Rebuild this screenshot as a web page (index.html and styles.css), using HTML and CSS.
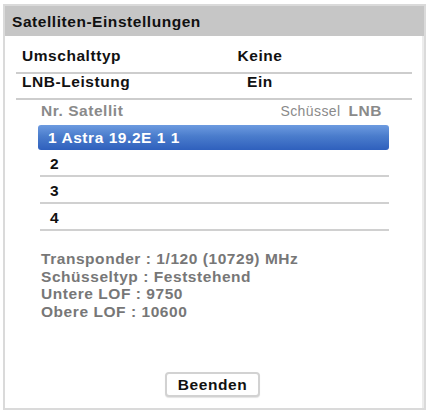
FILE: index.html
```html
<!DOCTYPE html>
<html lang="de">
<head>
<meta charset="utf-8">
<title>Satelliten-Einstellungen</title>
<link rel="stylesheet" href="styles.css">
</head>
<body>
<div class="panel">
  <div class="title">Satelliten-Einstellungen</div>
  <div class="settings">
    <div class="setting first"><span class="label">Umschalttyp</span><span class="value">Keine</span></div>
    <div class="setting second"><span class="label">LNB-Leistung</span><span class="value">Ein</span></div>
  </div>
  <div class="table">
    <div class="thead"><span class="th-name">Nr. Satellit</span><span class="th-dish">Schüssel</span><span class="th-lnb">LNB</span></div>
    <div class="trow selected">1 Astra 19.2E 1 1</div>
    <div class="trow">2</div>
    <div class="trow">3</div>
    <div class="trow">4</div>
  </div>
  <div class="info">
    <div class="line l1">Transponder : 1/120 (10729) MHz</div>
    <div class="line l2">Schüsseltyp : Feststehend</div>
    <div class="line l3">Untere LOF : 9750</div>
    <div class="line l4">Obere LOF : 10600</div>
  </div>
  <div class="actions"><button class="btn">Beenden</button></div>
</div>
</body>
</html>
```
FILE: styles.css
```css
html, body {
  margin: 0;
  padding: 0;
  background: #ffffff;
}
body {
  font-family: "Liberation Sans", Arial, sans-serif;
  font-weight: bold;
  font-size: 15.5px;
  letter-spacing: 0.55px;
  color: #111111;
}
.panel {
  box-sizing: border-box;
  width: 423px;
  height: 406px;
  margin: 4px 2px 2px 3px;
  border: 2px solid #dadada;
  display: flex;
  flex-direction: column;
  box-shadow: inset -3px 0 0 -1px #ececec;
}
.title {
  height: 30px;
  line-height: 31px;
  padding-left: 7px;
  background: #c6c6c6;
  color: #111111;
}
.settings {
  margin: 0 12px 0 11px;
}
.setting {
  display: flex;
  border-bottom: 2px solid #cdcdcd;
}
.setting .label {
  width: 198px;
  padding-left: 6px;
}
.setting .value {
  width: 80px;
  text-align: center;
}
.setting.first {
  padding-top: 11px;
  padding-bottom: 7px;
  line-height: 18px;
}
.setting.second {
  padding-top: 0;
  padding-bottom: 8px;
  line-height: 16px;
}
.table {
  margin: 0 35px 0 33px;
}
.thead {
  display: flex;
  align-items: baseline;
  padding: 3px 7px 6px 3px;
  line-height: 16px;
  color: #8a8a8a;
}
.th-name {
  flex: 1;
}
.th-dish {
  font-weight: normal;
  font-size: 14px;
  letter-spacing: 0.4px;
  margin-right: 8px;
}
.trow {
  height: 25px;
  line-height: 27px;
  padding-left: 10px;
  border-bottom: 2px solid #d0d0d0;
  margin-left: 2px;
}
.trow.selected {
  height: 25px;
  line-height: 25px;
  margin-left: 0;
  border-bottom: 0;
  border-radius: 3px;
  color: #ffffff;
  background: linear-gradient(#6d9be0 0%, #4a7ccc 45%, #2f60bd 100%);
}
.info {
  margin: 19px 0 0 36px;
  color: #777777;
}
.line {
  line-height: 17px;
}
.l2 { margin-top: 1px; }
.l3 { margin-top: 0; }
.l4 { margin-top: 1px; }
.actions {
  margin-top: auto;
  margin-bottom: 11px;
  display: flex;
  justify-content: center;
  padding-right: 4px;
}
.btn {
  box-sizing: border-box;
  width: 95px;
  height: 25px;
  padding: 0;
  font-family: "Liberation Sans", Arial, sans-serif;
  font-weight: bold;
  font-size: 15.5px;
  letter-spacing: 0.55px;
  color: #111111;
  background: #ffffff;
  border: 2px solid #d2d2d2;
  border-radius: 4px;
  box-shadow: 0 1px 1px #e4e4e4;
}
```
